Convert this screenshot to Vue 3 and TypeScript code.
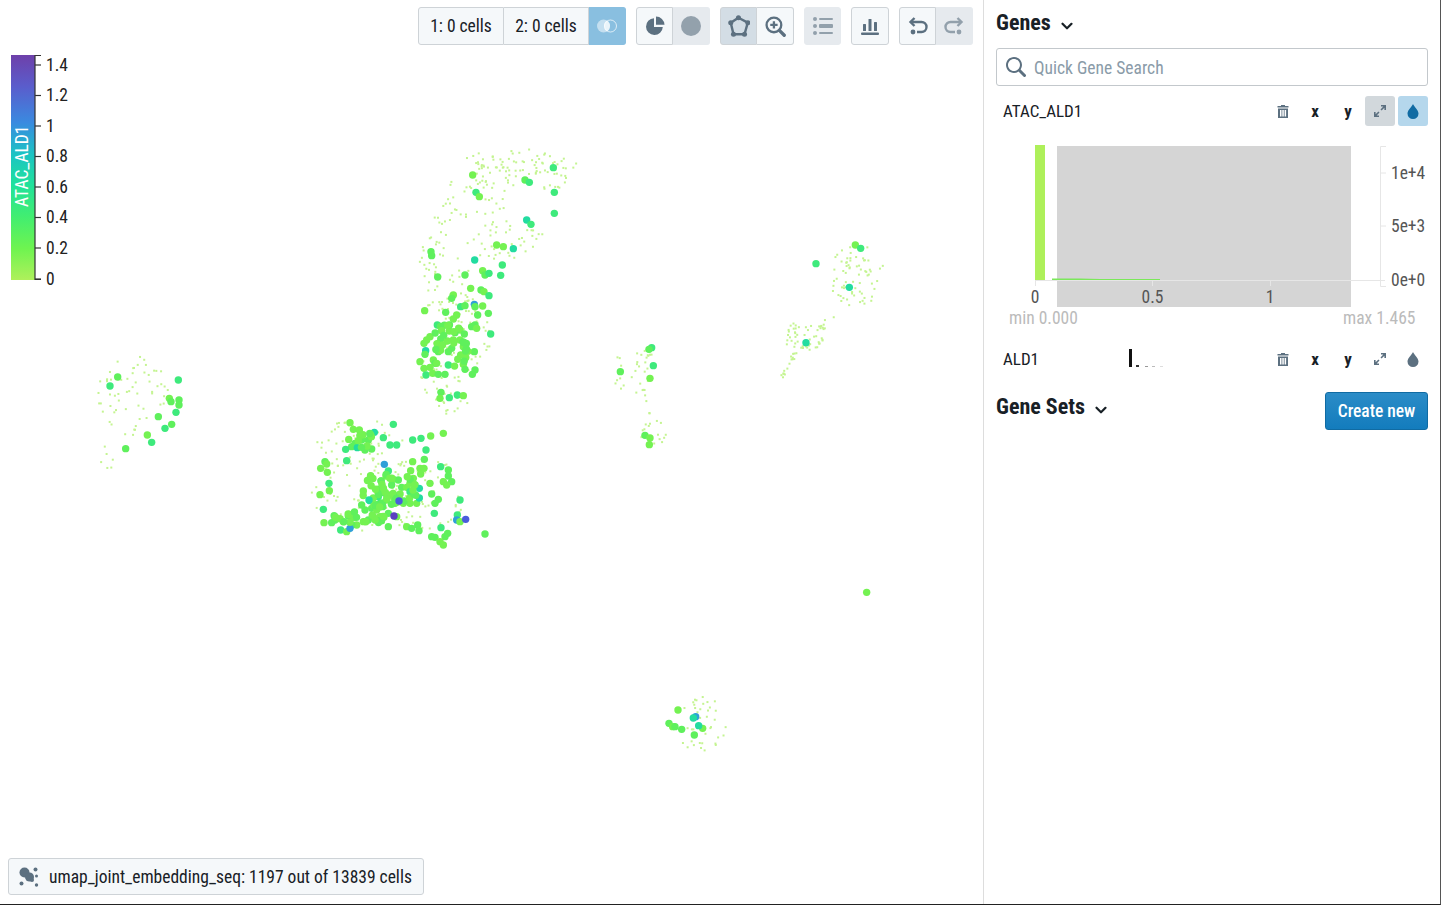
<script setup lang="ts">
type Dot = [number, number, string?]

const C = {
  g: '#5ff05c',
  l: '#74f252',
  m: '#3eea7c',
  t: '#22dca0',
  b: '#2f9fd8',
  i: '#4a5cdc',
  v: '#5a3fc0'
}

// big dots, in the crop coordinates of each cluster (3 units per pixel)
const clusters: { ox: number; oy: number; pts: Dot[] }[] = [
  {
    ox: 300,
    oy: 400,
    pts: [
      [150, 68], [160, 88], [178, 90], [280, 73, 'm'], [223, 97, 't'], [212, 105], [250, 113, 'm'], [185, 120],
      [205, 120], [165, 130], [155, 140], [172, 143, 't'], [137, 148, 'm'], [195, 150], [215, 147], [270, 135, 'm'],
      [290, 135, 'm'], [338, 120, 'm'], [363, 115, 'm'], [392, 108], [430, 100], [378, 150, 'm'], [140, 182, 'm'],
      [75, 185], [80, 192], [62, 205], [82, 217], [87, 250, 'm'], [88, 272], [60, 284], [70, 328, 'm'], [253, 193, 'b'],
      [265, 213, 'm'], [258, 228], [338, 185], [373, 178], [332, 212], [360, 205], [372, 205], [362, 222], [422, 200, 'm'],
      [445, 210], [445, 228], [430, 245], [455, 245], [440, 255], [390, 250], [280, 238], [295, 240], [275, 255],
      [305, 262], [340, 235], [330, 250], [320, 262], [345, 255], [358, 265, 't'], [330, 275, 'm'], [250, 272], [235, 290, 'm'],
      [255, 280, 'm'], [190, 273], [292, 288, 't'], [300, 300], [240, 310, 'm'], [210, 302, 't'], [185, 315],
      [195, 330], [215, 325], [230, 330], [260, 300], [285, 310], [310, 310], [330, 310], [350, 310], [358, 294, 't'],
      [395, 282], [415, 298], [405, 310], [403, 340, 'm'], [290, 350], [250, 350, 't'], [265, 340], [240, 350],
      [220, 350], [205, 360], [190, 365], [170, 375], [155, 375], [145, 348], [130, 365], [105, 360], [95, 368], [72, 368],
      [122, 390, 'm'], [140, 395], [150, 385, 'b'], [265, 380], [320, 380], [335, 385], [353, 375], [357, 392], [423, 383, 'm'],
      [443, 400], [435, 410], [405, 412], [395, 410], [420, 425], [430, 435], [472, 345, 'm'], [470, 360, 'b'], [480, 365],
      [497, 358, 'i'], [480, 300, 'm'], [555, 402]
    ]
  },
  {
    ox: 410,
    oy: 140,
    pts: [
      [430, 83, 'm'], [188, 105], [345, 120], [358, 127, 'm'], [198, 157, 'm'], [208, 170], [433, 157, 'm'], [433, 220, 'm'],
      [350, 240, 't'], [363, 253, 'm'], [260, 315], [280, 320], [310, 326, 't'], [63, 335], [65, 347], [194, 360, 't'],
      [277, 375, 'm'], [218, 392], [165, 405], [225, 405], [237, 400, 'm'], [272, 406, 'm'], [83, 411], [182, 445], [213, 450],
      [222, 455], [237, 467, 'm'], [130, 465], [125, 475], [193, 493, 'b'], [218, 498], [195, 500], [152, 500, 'm'], [165, 497],
      [44, 512], [107, 517], [235, 520], [203, 525], [140, 525], [130, 537], [82, 555, 'm'], [195, 555], [185, 560], [200, 565],
      [242, 582, 'm'], [118, 573], [150, 570], [163, 582], [135, 578], [60, 590], [50, 600], [42, 610], [87, 611, 'b'], [150, 600],
      [130, 600], [125, 625], [115, 635], [160, 620], [193, 635], [152, 645], [47, 632, 't'], [45, 643], [85, 635], [30, 665],
      [70, 660], [75, 670], [80, 670], [115, 675, 'm'], [160, 673], [165, 688], [195, 690], [187, 703], [42, 685], [60, 682],
      [48, 705, 'm'], [68, 700], [85, 703], [105, 703], [93, 757], [90, 775], [118, 773, 'm'], [142, 765, 'm'], [160, 767]
    ]
  },
  {
    ox: 90,
    oy: 345,
    pts: [
      [83, 96], [60, 123, 'm'], [265, 105, 'm'], [238, 160], [243, 170], [267, 165], [267, 180], [258, 202, 'm'], [205, 215],
      [245, 238], [225, 250, 'm'], [172, 270], [185, 292, 'm'], [107, 311]
    ]
  },
  {
    ox: 600,
    oy: 235,
    pts: [
      [155, 338, 'm'], [147, 343], [160, 392, 'm'], [61, 410], [150, 430], [135, 601], [150, 609], [148, 629], [766, 30], [782, 40, 'm'],
      [648, 86, 'm'], [748, 157, 't'], [618, 323, 't']
    ]
  },
  {
    ox: 650,
    oy: 580,
    pts: [
      [650, 37], [84, 390], [137, 410, 'b'], [130, 414, 't'], [158, 445], [146, 437, 't'], [57, 430], [68, 440], [75, 440], [95, 448],
      [133, 465]
    ]
  }
]

let seed = 20240
const rnd = () => {
  seed = (seed * 16807) % 2147483647
  return seed / 2147483647
}

const inEllipse = (cx: number, cy: number, rx: number, ry: number) => {
  const a = rnd() * Math.PI * 2
  const d = Math.sqrt(rnd())
  return { x: cx + Math.cos(a) * d * rx, y: cy + Math.sin(a) * d * ry }
}

// dense cores of the two big clusters
const cores: [number, number, number, number, number][] = [
  [388, 490, 30, 18, 45],
  [360, 518, 32, 7, 18],
  [450, 345, 20, 24, 26],
  [362, 440, 16, 8, 8]
]

const bigDots = [
  ...clusters.flatMap((c) =>
    c.pts.map(([x, y, k]) => ({
      x: c.ox + x / 3,
      y: c.oy + y / 3,
      fill: C[(k ?? (x % 2 ? 'g' : 'l')) as keyof typeof C]
    }))
  ),
  ...cores.flatMap(([cx, cy, rx, ry, n]) =>
    Array.from({ length: n }, () => ({ ...inEllipse(cx, cy, rx, ry), fill: rnd() > 0.5 ? C.l : C.g }))
  ),
  // the few high values sit on top
  { x: 399, y: 501, fill: C.i },
  { x: 394, y: 516, fill: C.v },
  { x: 369, y: 500, fill: C.t }
]

// faint background cells: x, y, rx, ry, how many
const clouds: [number, number, number, number, number][] = [
  [525, 170, 54, 22, 80], [478, 190, 32, 40, 45], [505, 240, 40, 20, 40], [445, 215, 12, 22, 12], [430, 255, 14, 20, 14],
  [445, 290, 26, 42, 50], [465, 330, 26, 40, 50], [440, 370, 22, 30, 35], [450, 403, 18, 12, 18], [132, 395, 36, 40, 60],
  [106, 458, 7, 14, 6], [360, 440, 45, 22, 40], [370, 490, 60, 40, 70], [425, 490, 40, 40, 45], [635, 370, 26, 22, 28],
  [652, 432, 14, 14, 20], [856, 275, 28, 32, 70], [803, 335, 21, 15, 45], [700, 722, 28, 30, 40]
]

// thin streaks: from, to, jitter, how many
const streaks: [number, number, number, number, number, number][] = [
  [781, 377, 795, 350, 4, 16],
  [815, 330, 832, 316, 6, 10],
  [643, 388, 648, 412, 2, 6]
]

const smallDots = [
  ...clouds.flatMap(([cx, cy, rx, ry, n]) =>
    Array.from({ length: n }, () => inEllipse(cx, cy, rx, ry))
  ),
  ...streaks.flatMap(([x0, y0, x1, y1, j, n]) =>
    Array.from({ length: n }, () => {
      const t = rnd()
      return { x: x0 + (x1 - x0) * t + (rnd() - 0.5) * j, y: y0 + (y1 - y0) * t + (rnd() - 0.5) * j }
    })
  )
]

const legendTicks = [
  { y: 65, t: '1.4' },
  { y: 95.5, t: '1.2' },
  { y: 126, t: '1' },
  { y: 156.5, t: '0.8' },
  { y: 187, t: '0.6' },
  { y: 217.5, t: '0.4' },
  { y: 248, t: '0.2' },
  { y: 279, t: '0' }
]

const spark = [
  [1136, 365, 3, 2, '#333'],
  [1145, 366, 3, 1, '#999'],
  [1152, 366, 3, 1, '#bbb'],
  [1160, 366, 3, 1, '#ddd']
] as const

const chevron =
  'M12 5c-.28 0-.53.11-.71.29L8 8.59l-3.29-3.3a1.003 1.003 0 00-1.42 1.42l4 4c.18.18.43.29.71.29s.53-.11.71-.29l4-4A1.003 1.003 0 0012 5z'
const trash = 'M4 0h4v1h3.5v1.5H.5V1H4zM1 3.5h10V13H1zM3 5v6.5h1.5V5zm2.3 0v6.5h1.5V5zM7.6 5v6.5h1.5V5z'
const expand = 'M7 0h5v5h-1.6V2.7L7.6 5.5 6.5 4.4 9.3 1.6H7zM0 7h1.6v2.3l2.8-2.8 1.1 1.1-2.8 2.8H5V12H0z'
const drop = 'M6 0c.5 2 5.5 6 5.5 9.5a5.5 5.5 0 0 1-11 0C.5 6 5.5 2 6 0z'
</script>

<template>
  <div class="page">
    <main class="vis">
      <svg class="scatter" width="983" height="904">
        <rect v-for="(d, i) in smallDots" :key="'s' + i" :x="d.x" :y="d.y" width="2" height="2" fill="#c4f491" />
        <circle v-for="(d, i) in bigDots" :key="'b' + i" :cx="d.x" :cy="d.y" r="3.7" :fill="d.fill" />
      </svg>

      <svg class="legend" width="80" height="240" viewBox="0 50 80 240">
        <defs>
          <linearGradient id="ramp" x1="0" y1="0" x2="0" y2="1">
            <stop offset="0" stop-color="#6e40aa" />
            <stop offset="0.14" stop-color="#5a5dcc" />
            <stop offset="0.3" stop-color="#3a8ae0" />
            <stop offset="0.44" stop-color="#1bc3c4" />
            <stop offset="0.58" stop-color="#21e29a" />
            <stop offset="0.72" stop-color="#42ee70" />
            <stop offset="0.86" stop-color="#6ef450" />
            <stop offset="1" stop-color="#aff05b" />
          </linearGradient>
        </defs>
        <rect x="11" y="55" width="24" height="225" fill="url(#ramp)" />
        <path d="M41 55.5H35V279.5H41" fill="none" stroke="#333" stroke-width="1.2" />
        <g v-for="t in legendTicks" :key="t.t">
          <line x1="35" x2="41" :y1="t.y" :y2="t.y" stroke="#333" stroke-width="1.2" />
          <text class="legend-tick" x="46" :y="t.y + 5.5">{{ t.t }}</text>
        </g>
        <text class="legend-name" transform="translate(28 207) rotate(-90)">ATAC_ALD1</text>
      </svg>

      <div class="toolbar">
        <div class="group">
          <button class="btn text first">1: 0 cells</button>
          <button class="btn text">2: 0 cells</button>
          <button class="btn active-blue">
            <svg width="20" height="14" viewBox="0 0 20 14">
              <circle cx="6.5" cy="7" r="6.5" fill="#fff" opacity=".5" />
              <circle cx="13.5" cy="7" r="6" fill="none" stroke="#fff" stroke-width="1" opacity=".7" />
              <path d="M10 1.5a6.5 6.5 0 0 1 0 11a6.5 6.5 0 0 1 0-11z" fill="#fff" opacity=".65" />
            </svg>
          </button>
        </div>
        <div class="group">
          <button class="btn">
            <svg width="20" height="20" viewBox="0 0 20 20" fill="#5c7080">
              <path d="M9 2.2a8.4 8.4 0 1 0 8.8 8.8H9z" />
              <path d="M11 .5v8.3h8.5A8.5 8.5 0 0 0 11 .5z" />
            </svg>
          </button>
          <button class="btn off">
            <svg width="20" height="20" viewBox="0 0 20 20"><circle cx="10" cy="10" r="10" fill="#5c7080" opacity=".6" /></svg>
          </button>
        </div>
        <div class="group">
          <button class="btn active">
            <svg width="22" height="22" viewBox="0 0 20 20" fill="none" stroke="#5c7080" stroke-width="2.2">
              <path d="M9.5 2.5 18 7l-3 10.500H5L2.500 7z" />
              <g fill="#5c7080" stroke="none">
                <circle cx="9.500" cy="2.500" r="2.300" /><circle cx="18" cy="7" r="2.300" /><circle cx="15" cy="17.500" r="2.300" />
                <circle cx="5" cy="17.500" r="2.300" /><circle cx="2.500" cy="7" r="2.300" />
              </g>
            </svg>
          </button>
          <button class="btn">
            <svg width="21" height="21" viewBox="0 0 20 20" fill="none" stroke="#5c7080" stroke-width="2.2">
              <circle cx="8.5" cy="8.5" r="7" />
              <path d="M5 8.5h7M8.5 5v7" />
              <path d="M13.7 13.7 18.3 18.3" stroke-width="3.2" stroke-linecap="round" />
            </svg>
          </button>
        </div>
        <div class="group">
          <button class="btn off">
            <svg width="20" height="20" viewBox="0 0 20 20" fill="#5c7080" opacity=".6">
              <circle cx="2" cy="3" r="2" /><circle cx="2" cy="10" r="2" /><circle cx="2" cy="17" r="2" />
              <rect x="6" y="2" width="14" height="2" rx="1" /><rect x="6" y="8" width="14" height="4" rx="1" /><rect x="6" y="16" width="14" height="2" rx="1" />
            </svg>
          </button>
        </div>
        <div class="group">
          <button class="btn wide">
            <svg width="20" height="20" viewBox="0 0 20 20" fill="#5c7080">
              <rect x="3" y="8" width="3" height="7" rx=".5" /><rect x="8.5" y="3" width="3" height="12" rx=".5" />
              <rect x="14" y="6" width="3" height="9" rx=".5" /><rect x="1" y="16.5" width="18" height="2.5" rx="1" />
            </svg>
          </button>
        </div>
        <div class="group">
          <button class="btn">
            <svg width="20" height="20" viewBox="0 0 20 20" fill="none" stroke="#5c7080" stroke-width="2.4">
              <path d="M6.5 2 2.5 6l4 4" />
              <path d="M3 6h10.5a4.8 4.8 0 0 1 0 10H9" />
              <circle cx="5" cy="16" r="2.4" fill="#5c7080" stroke="none" />
            </svg>
          </button>
          <button class="btn off">
            <svg width="20" height="20" viewBox="0 0 20 20" fill="none" stroke="#5c7080" stroke-width="2.4" opacity=".6">
              <path d="M13.5 2l4 4-4 4" />
              <path d="M17 6H6.5a4.8 4.8 0 0 0 0 10H11" />
              <circle cx="15" cy="16" r="2.4" fill="#5c7080" stroke="none" />
            </svg>
          </button>
        </div>
      </div>

      <div class="embedding-tag">
        <svg width="20" height="20" viewBox="0 0 20 20" fill="#5c7080">
          <circle cx="5.5" cy="5.5" r="5" /><circle cx="10.5" cy="10" r="4.5" /><circle cx="16.5" cy="2.5" r="2" />
          <circle cx="17.5" cy="9" r="1.5" /><circle cx="17.5" cy="18" r="1.7" /><circle cx="2.5" cy="16.5" r="2" />
          <circle cx="13" cy="13" r="2" />
        </svg>
        <span>umap_joint_embedding_seq: 1197 out of 13839 cells</span>
      </div>
    </main>

    <aside class="side">
      <h2 class="title">
        Genes
        <svg class="chev" width="18" height="18" viewBox="0 0 16 16" fill="#182026"><path :d="chevron" /></svg>
      </h2>
      <div class="search">
        <svg width="20" height="20" viewBox="0 0 20 20" fill="#5c7080"><path d="M19.56 17.44l-4.94-4.94A8.004 8.004 0 0016 8c0-4.42-3.58-8-8-8S0 3.58 0 8s3.58 8 8 8c1.67 0 3.21-.51 4.5-1.38l4.94 4.94a1.498 1.498 0 102.12-2.12zM8 14c-3.31 0-6-2.69-6-6s2.69-6 6-6 6 2.69 6 6-2.69 6-6 6z" /></svg>
        <span>Quick Gene Search</span>
      </div>

      <div class="gene-row">
        <span class="gene-name">ATAC_ALD1</span>
        <div class="gene-actions">
          <span class="act">
            <svg width="12" height="13" viewBox="0 0 12 13" fill="#5c7080"><path :d="trash" fill-rule="evenodd" /></svg>
          </span>
          <span class="act letter">x</span>
          <span class="act letter">y</span>
          <span class="act on-gray">
            <svg width="12" height="12" viewBox="0 0 12 12" fill="#5c7080"><path :d="expand" /></svg>
          </span>
          <span class="act on-blue">
            <svg width="12" height="15" viewBox="0 0 12 15" fill="#106ba3"><path :d="drop" /></svg>
          </span>
        </div>
      </div>

      <svg class="hist" width="443" height="204" viewBox="985 130 443 204">
        <rect x="1057" y="146" width="294" height="161" fill="#d5d5d5" />
        <rect x="1035" y="145" width="10" height="135" fill="#aef05a" />
        <path d="M1052 278.5H1080L1100 279H1160V280H1052z" fill="#7be85a" />
        <path d="M1035 280.5H1385M1035.5 280V286M1152.5 280V286M1270.5 280V286" fill="none" stroke="#e6e6e6" />
        <path d="M1386 146.5H1380.5V286.5H1386M1380 173H1386M1380 226H1386" fill="none" stroke="#e6e6e6" />
        <text class="axis" x="1035" y="303" text-anchor="middle">0</text>
        <text class="axis" x="1152.5" y="303" text-anchor="middle">0.5</text>
        <text class="axis" x="1270" y="303" text-anchor="middle">1</text>
        <text class="axis" x="1391" y="179">1e+4</text>
        <text class="axis" x="1391" y="232">5e+3</text>
        <text class="axis" x="1391" y="286">0e+0</text>
        <text class="range" x="1009" y="324">min 0.000</text>
        <text class="range" x="1343" y="324">max 1.465</text>
      </svg>

      <div class="gene-row second">
        <span class="gene-name">ALD1</span>
        <svg class="spark" width="60" height="20" viewBox="1129 349 60 20">
          <rect x="1129" y="349" width="3" height="18" fill="#111" />
          <rect v-for="s in spark" :key="s[0]" :x="s[0]" :y="s[1]" :width="s[2]" :height="s[3]" :fill="s[4]" />
        </svg>
        <div class="gene-actions">
          <span class="act">
            <svg width="12" height="13" viewBox="0 0 12 13" fill="#5c7080"><path :d="trash" fill-rule="evenodd" /></svg>
          </span>
          <span class="act letter">x</span>
          <span class="act letter">y</span>
          <span class="act">
            <svg width="12" height="12" viewBox="0 0 12 12" fill="#5c7080"><path :d="expand" /></svg>
          </span>
          <span class="act">
            <svg width="12" height="15" viewBox="0 0 12 15" fill="#5c7080"><path :d="drop" /></svg>
          </span>
        </div>
      </div>

      <div class="sets-head">
        <h2 class="title">
          Gene Sets
          <svg class="chev" width="18" height="18" viewBox="0 0 16 16" fill="#182026"><path :d="chevron" /></svg>
        </h2>
        <button class="create">Create new</button>
      </div>
    </aside>
  </div>
</template>

<style>
html,
body {
  margin: 0;
  background: #fff;
}
</style>

<style scoped>
.page {
  display: flex;
  width: 1441px;
  height: 905px;
  box-sizing: border-box;
  overflow: hidden;
  border-right: 1px solid #555;
  border-bottom: 1px solid #222;
  font-family: Roboto, "Liberation Sans", sans-serif;
  font-stretch: 75%;
  color: #182026;
  font-size: 17.5px;
}

.vis {
  position: relative;
  width: 983px;
  flex: none;
  padding: 7px 10px 0 0;
  box-sizing: border-box;
}

.scatter,
.legend {
  position: absolute;
  left: 0;
  top: 0;
}

.scatter {
  filter: blur(0.4px);
}

.legend {
  top: 50px;
}

.legend-tick {
  font-size: 17.5px;
  fill: #222;
}

.legend-name {
  font-size: 17.5px;
  fill: #fff;
}

.toolbar {
  position: relative;
  display: flex;
  justify-content: flex-end;
  gap: 10px;
}

.group {
  display: flex;
}

.btn {
  width: 37px;
  height: 38px;
  padding: 0;
  display: flex;
  align-items: center;
  justify-content: center;
  background: #f5f8fa;
  border: 1px solid #ced3d7;
  border-radius: 0;
  font: inherit;
  color: #182026;
  box-sizing: border-box;
}

.group .btn + .btn {
  border-left: 0;
}

.group .btn:first-child {
  border-radius: 3px 0 0 3px;
}

.group .btn:last-child {
  border-radius: 0 3px 3px 0;
}

.group .btn:only-child {
  border-radius: 3px;
}

.btn.text {
  width: 85px;
  padding-top: 0.5px;
}

.btn.text.first {
  width: 86px;
}

.btn.wide {
  width: 38px;
}

.btn.off {
  background: #e6eaee;
  border-color: #e6eaee;
}

.btn.active {
  background: #d3dde5;
}

.btn.active-blue {
  background: #89bfe0;
  border-color: #89bfe0;
}

.embedding-tag {
  position: absolute;
  left: 8px;
  top: 858px;
  width: 416px;
  height: 37px;
  box-sizing: border-box;
  padding-left: 10px;
  display: flex;
  align-items: center;
  gap: 10px;
  background: #f5f8fa;
  border: 1px solid #ced3d7;
  border-radius: 3px;
  white-space: nowrap;
}

.side {
  flex: 1;
  border-left: 1px solid #ddd;
  padding: 0 12px;
  box-sizing: border-box;
}

.title {
  margin: 0;
  font-size: 22px;
  font-weight: 700;
  line-height: 46px;
  height: 48px;
  box-sizing: border-box;
  padding-bottom: 2px;
  display: flex;
  align-items: center;
  gap: 7px;
}

.chev {
  margin-top: 6px;
}

.search {
  height: 38px;
  box-sizing: border-box;
  border: 1px solid #c3c8cc;
  border-radius: 3px;
  display: flex;
  align-items: center;
  gap: 8px;
  padding-left: 9px;
  color: #8a9ba8;
}

.search span {
  padding-top: 2px;
}

.gene-row {
  height: 30px;
  margin-top: 10px;
  padding-left: 7px;
  display: flex;
  align-items: center;
  font-size: 17px;
}

.gene-row.second {
  margin-top: 10px;
}

.gene-name {
  flex: none;
}

.spark {
  margin-left: 90px;
}

.gene-actions {
  margin-left: auto;
  display: flex;
  gap: 3px;
}

.act {
  width: 30px;
  height: 30px;
  display: flex;
  align-items: center;
  justify-content: center;
  border-radius: 3px;
}

.act:nth-child(2),
.act:nth-child(4) {
  margin-left: -1px;
}

.letter {
  font-weight: 700;
  color: #182026;
}

.on-gray {
  background: #d2d8dc;
}

.on-blue {
  background: #b5d7ec;
}

.hist {
  display: block;
  margin: 4px 0 0 -11px;
}

.axis {
  font-size: 17.5px;
  fill: #555;
}

.range {
  font-size: 17.5px;
  fill: #bbb;
}

.sets-head {
  margin-top: 18px;
  display: flex;
  justify-content: space-between;
  align-items: center;
}

.sets-head .title {
  height: 38px;
  line-height: 36px;
  margin-top: -7px;
}

.create {
  width: 103px;
  height: 38px;
  padding: 0;
  color: #fff;
  font: inherit;
  font-weight: 500;
  background: linear-gradient(#2b8cc7, #137cbd);
  border: 1px solid #106ba3;
  border-radius: 3px;
}
</style>
